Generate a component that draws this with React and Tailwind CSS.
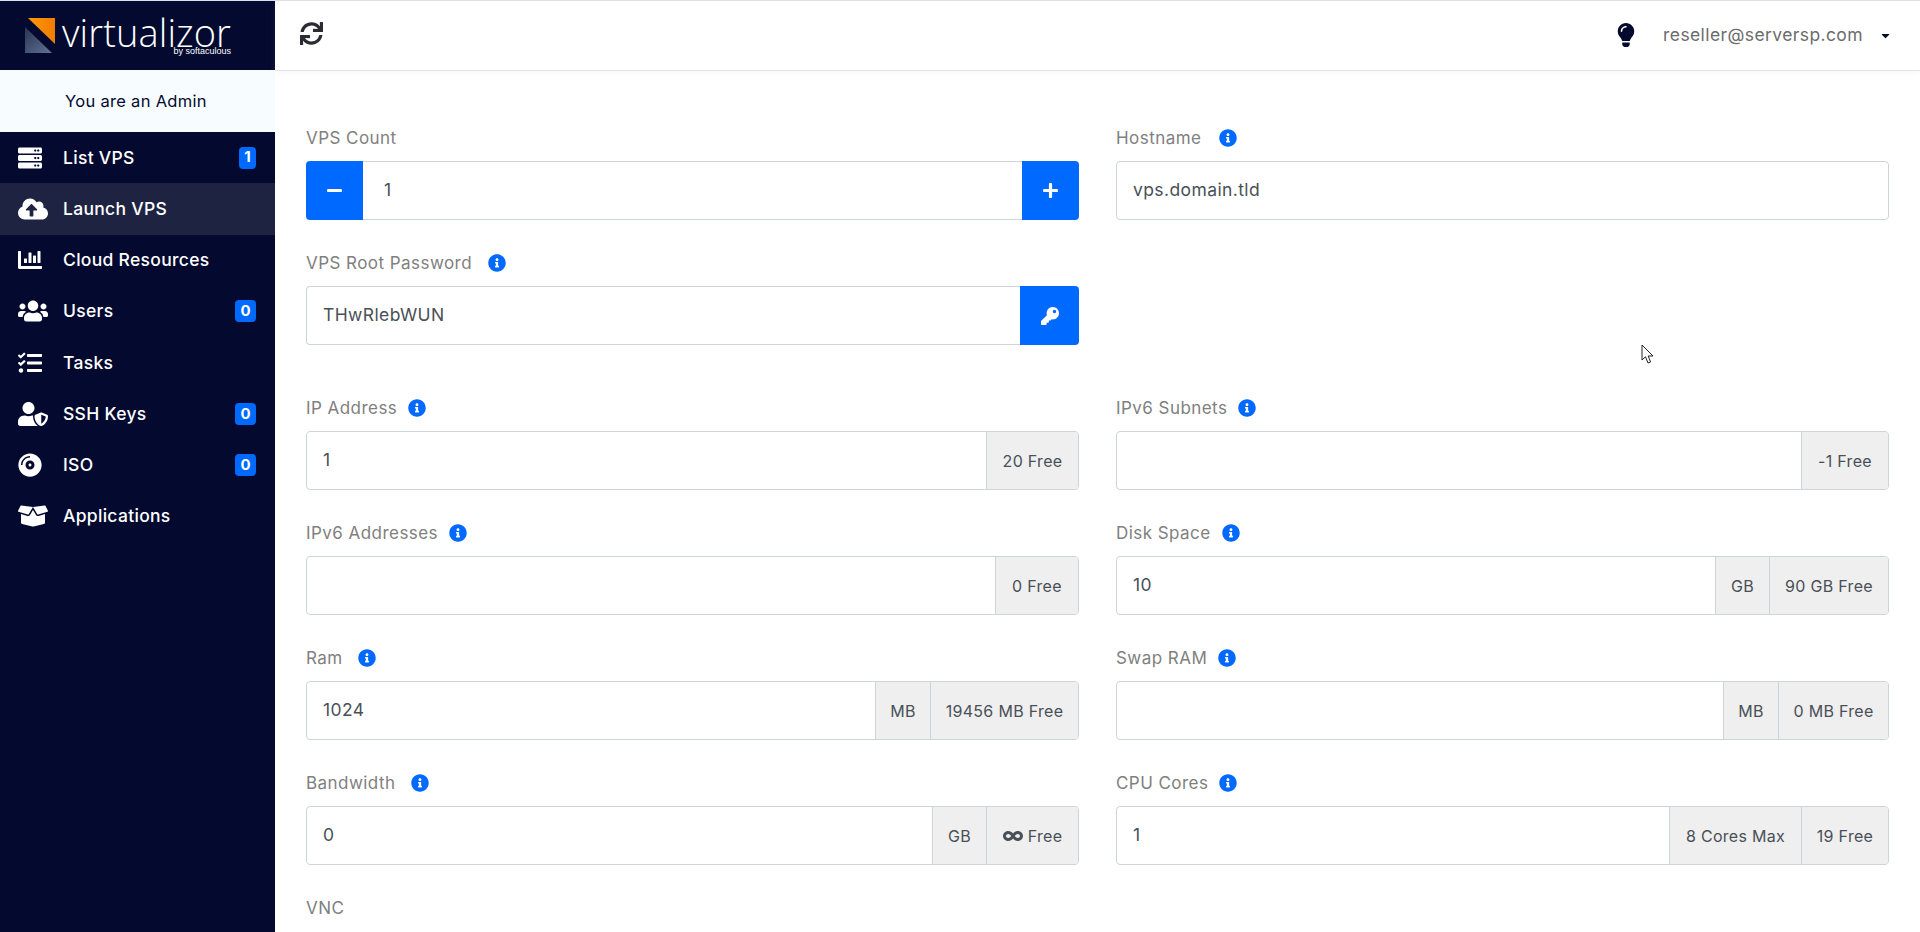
import {
    FaServer, FaCloudUploadAlt, FaChartBar, FaUsers, FaTasks, FaUserShield, FaCompactDisc, FaBoxOpen,
    FaSync, FaLightbulb, FaCaretDown, FaInfoCircle, FaMinus, FaPlus, FaKey, FaInfinity,
} from "react-icons/fa";

const navItems = [
    { name: "List VPS", icon: FaServer, size: "text-[24px]", badge: "1", badgeWidth: "w-[17px]" },
    { name: "Launch VPS", icon: FaCloudUploadAlt, size: "text-[30px]", active: true },
    { name: "Cloud Resources", icon: FaChartBar, size: "text-[24px]" },
    { name: "Users", icon: FaUsers, size: "text-[30px]", badge: "0", badgeWidth: "w-[21px]" },
    { name: "Tasks", icon: FaTasks, size: "text-[24px]" },
    { name: "SSH Keys", icon: FaUserShield, size: "text-[30px]", badge: "0", badgeWidth: "w-[21px]" },
    { name: "ISO", icon: FaCompactDisc, size: "text-[24px]", badge: "0", badgeWidth: "w-[21px]" },
    { name: "Applications", icon: FaBoxOpen, size: "text-[30px]" },
];

function Logo() {
    return (
        <div className="flex h-[69px] bg-[#03092f] pl-[25px] pt-[17px]">
            <svg width="31" height="36" viewBox="0 0 31 36" className="shrink-0">
                <defs>
                    <linearGradient id="logoOrange" x1="0" y1="0" x2="1" y2="0">
                        <stop offset="0" stopColor="#ff9a0a" />
                        <stop offset="1" stopColor="#f07c00" />
                    </linearGradient>
                    <linearGradient id="logoSlate" x1="0" y1="0" x2="1" y2="1">
                        <stop offset="0" stopColor="#2a3350" />
                        <stop offset="1" stopColor="#5f7397" />
                    </linearGradient>
                </defs>
                <polygon points="3,0 30,0 30,26" fill="url(#logoOrange)" />
                <polygon points="0,9 0,35 27,35" fill="url(#logoSlate)" />
            </svg>
            <div className="ml-[6px] flex flex-col items-end font-['Liberation_Sans',sans-serif] text-white">
                <span className="text-[38px] leading-[29px] tracking-[0.1px] font-['Open_Sans',sans-serif] font-light">virtualizor</span>
                <span className="text-[9px] leading-[8px]">by softaculous</span>
            </div>
        </div>
    );
}

function Sidebar() {
    return (
        <aside className="flex w-[275px] shrink-0 flex-col bg-[#03092f]">
            <Logo />
            <div className="flex h-[62px] items-center bg-[#f7fcff] pl-[65px] text-[16.5px] tracking-[0.3px] text-[#03092f]">
                You are an Admin
            </div>
            <nav className="flex flex-col">
                {navItems.map((item) => (
                    <div
                        key={item.name}
                        className={`flex h-[51.25px] items-center pl-[18px] pr-[19px] text-white ${item.active ? "bg-[#1e2342]" : ""}`}
                    >
                        <span className={`flex w-[45px] shrink-0 items-center ${item.size}`}>
                            <item.icon />
                        </span>
                        <span className="flex-1 text-[17.5px] font-medium tracking-[0.3px]">{item.name}</span>
                        {item.badge && (
                            <span className={`flex h-[22px] ${item.badgeWidth} items-center justify-center rounded-[4px] bg-[#0069ff] text-[15px] font-bold`}>
                                {item.badge}
                            </span>
                        )}
                    </div>
                ))}
            </nav>
        </aside>
    );
}

function Header() {
    return (
        <header className="flex h-[70px] shrink-0 items-center justify-between border-b border-[#e3e3ee] bg-white pl-[25px] pr-[28px] shadow-[0_2px_6px_rgba(200,200,220,0.12)]">
            <FaSync className="-mt-[4px] text-[23px] text-[#2b2b33]" />
            <div className="flex items-center">
                <FaLightbulb className="-mt-[2px] text-[24px] text-[#03092f]" />
                <span className="ml-[25px] text-[17.5px] tracking-[0.4px] text-[#6c6c6c]">reseller@serversp.com</span>
                <FaCaretDown className="ml-[16px] text-[13px] text-[#03092f]" />
            </div>
        </header>
    );
}

function Label({ text, info, gap = "ml-[11px]" }) {
    return (
        <div className="flex h-[45px] items-center text-[17px] tracking-[0.45px] text-[#808080]">
            {text}
            {info && <FaInfoCircle className={`${gap} -mt-[1px] text-[18px] text-[#0069ff]`} />}
        </div>
    );
}

function Addon({ width, children }) {
    return (
        <span className={`flex h-full ${width} shrink-0 items-center justify-center gap-[5px] border-l border-[#ced4da] bg-[#efefef] text-[16px] tracking-[0.3px] text-[#495057]`}>
            {children}
        </span>
    );
}

function Field({ label, info, gap, value, addons = [] }) {
    return (
        <div className="mb-[21px]">
            <Label text={label} info={info} gap={gap} />
            <div className="flex h-[59px] items-center overflow-hidden rounded-[4px] border border-[#ced4da] bg-white">
                <span className="flex-1 pl-[16px] text-[17.5px] tracking-[0.4px] text-[#495057]">{value}</span>
                {addons.map((a, i) => (
                    <Addon key={i} width={a.width}>{a.text}</Addon>
                ))}
            </div>
        </div>
    );
}

function Main() {
    return (
        <main className="flex min-w-0 flex-1 flex-col bg-white">
            <Header />
            <div className="overflow-hidden px-[31px] pt-[45px]">
                <div className="grid grid-cols-2 gap-x-[37px]">
                    <div className="mb-[21px]">
                        <Label text="VPS Count" />
                        <div className="flex h-[59px] items-center">
                            <button className="flex h-full w-[57px] shrink-0 items-center justify-center rounded-l-[4px] bg-[#0069ff] text-[17px] text-white">
                                <FaMinus />
                            </button>
                            <span className="flex h-full flex-1 items-center border-y border-[#ced4da] pl-[21px] text-[17.5px] text-[#495057]">1</span>
                            <button className="flex h-full w-[57px] shrink-0 items-center justify-center rounded-r-[4px] bg-[#0069ff] text-[17px] text-white">
                                <FaPlus />
                            </button>
                        </div>
                    </div>
                    <Field label="Hostname" info gap="ml-[18px]" value="vps.domain.tld" />

                    <div className="mb-[41px]">
                        <Label text="VPS Root Password" info gap="ml-[16px]" />
                        <div className="flex h-[59px] items-center">
                            <span className="flex h-full flex-1 items-center rounded-l-[4px] border border-r-0 border-[#ced4da] pl-[16px] text-[17.5px] tracking-[0.4px] text-[#495057]">THwRlebWUN</span>
                            <button className="flex h-full w-[59px] shrink-0 items-center justify-center rounded-r-[4px] bg-[#0069ff] text-[18px] text-white">
                                <FaKey />
                            </button>
                        </div>
                    </div>
                    <div />

                    <Field label="IP Address" info value="1" addons={[{ text: "20 Free", width: "w-[92px]" }]} />
                    <Field label="IPv6 Subnets" info value="" addons={[{ text: "-1 Free", width: "w-[87px]" }]} />

                    <Field label="IPv6 Addresses" info value="" addons={[{ text: "0 Free", width: "w-[83px]" }]} />
                    <Field label="Disk Space" info value="10" addons={[{ text: "GB", width: "w-[54px]" }, { text: "90 GB Free", width: "w-[119px]" }]} />

                    <Field label="Ram" info gap="ml-[15px]" value="1024" addons={[{ text: "MB", width: "w-[55px]" }, { text: "19456 MB Free", width: "w-[148px]" }]} />
                    <Field label="Swap RAM" info value="" addons={[{ text: "MB", width: "w-[55px]" }, { text: "0 MB Free", width: "w-[110px]" }]} />

                    <Field
                        label="Bandwidth"
                        info
                        gap="ml-[16px]"
                        value="0"
                        addons={[
                            { text: "GB", width: "w-[54px]" },
                            { text: <><FaInfinity className="text-[20px]" /> Free</>, width: "w-[92px]" },
                        ]}
                    />
                    <Field label="CPU Cores" info value="1" addons={[{ text: "8 Cores Max", width: "w-[132px]" }, { text: "19 Free", width: "w-[87px]" }]} />

                    <Label text="VNC" />
                </div>
            </div>
        </main>
    );
}

export default function App() {
    return (
        <div className="relative flex h-screen overflow-hidden border-t border-[#dfdfe6] font-['Inter',sans-serif]">
            <Sidebar />
            <Main />
            {/* mouse pointer captured in the screenshot */}
            <svg width="14" height="21" viewBox="0 0 14 21" className="absolute left-[1641px] top-[343px]">
                <path d="M1 1 L1 16 L4.5 12.8 L7 19 L9.6 18 L7.2 12 L12 12 Z" fill="#fff" stroke="#222" strokeWidth="1" />
            </svg>
        </div>
    );
}
